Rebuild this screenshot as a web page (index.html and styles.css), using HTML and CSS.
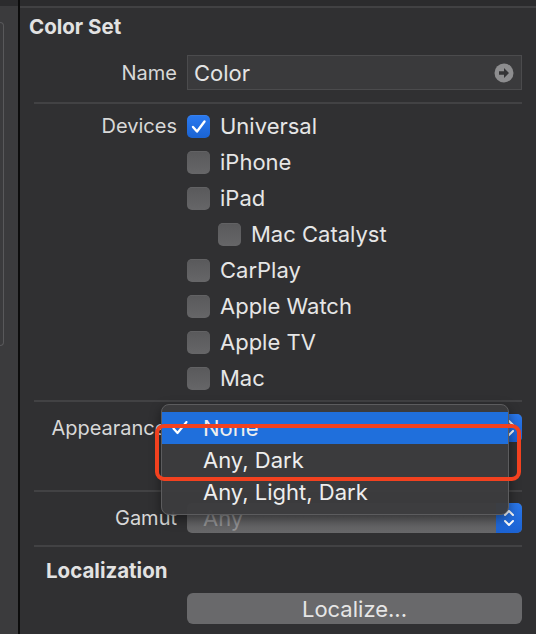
FILE: index.html
```html
<!DOCTYPE html>
<html>
<head>
<meta charset="utf-8">
<link rel="stylesheet" href="styles.css">
</head>
<body>
<div class="app">
  <div class="sidebar">
    <div class="side-top"></div>
    <div class="side-box"></div>
  </div>
  <div class="main">
    <div class="top-band"></div>
    <div class="panel">
      <div class="title">Color Set</div>

      <div class="row name-row">
        <div class="label">Name</div>
        <div class="field">
          <span>Color</span>
          <svg class="go" width="20" height="20" viewBox="0 0 20 20"><circle cx="10" cy="10" r="9.5" fill="#8d8d8f"/><path d="M5 8.2h5V5l5 5-5 5v-3.2H5z" fill="#343436"/></svg>
        </div>
      </div>

      <div class="sep"></div>

      <div class="devices">
        <div class="row drow">
          <div class="label">Devices</div>
          <div class="check-item"><span class="cb on"><svg width="23" height="23" viewBox="0 0 23 23"><path d="M6 12l4 4.5 7.5-10" fill="none" stroke="#fff" stroke-width="2.4" stroke-linecap="round" stroke-linejoin="round"/></svg></span><span class="val">Universal</span></div>
        </div>
        <div class="row drow"><div class="label"></div><div class="check-item"><span class="cb"></span><span class="val">iPhone</span></div></div>
        <div class="row drow"><div class="label"></div><div class="check-item"><span class="cb"></span><span class="val">iPad</span></div></div>
        <div class="row drow"><div class="label"></div><div class="check-item indent"><span class="cb"></span><span class="val">Mac Catalyst</span></div></div>
        <div class="row drow"><div class="label"></div><div class="check-item"><span class="cb"></span><span class="val">CarPlay</span></div></div>
        <div class="row drow"><div class="label"></div><div class="check-item"><span class="cb"></span><span class="val">Apple Watch</span></div></div>
        <div class="row drow"><div class="label"></div><div class="check-item"><span class="cb"></span><span class="val">Apple TV</span></div></div>
        <div class="row drow"><div class="label"></div><div class="check-item"><span class="cb"></span><span class="val">Mac</span></div></div>
      </div>

      <div class="sep"></div>

      <div class="appearance">
        <div class="row">
          <div class="label">Appearances</div>
          <div class="popup-btn blue-btn">
            <span class="pb-text">None</span>
            <span class="stepper"><svg width="26" height="28" viewBox="0 0 26 28"><path d="M9 11l4-4 4 4M9 17l4 4 4-4" fill="none" stroke="#fff" stroke-width="2" stroke-linecap="round" stroke-linejoin="round"/></svg></span>
          </div>
        </div>
        <div class="menu">
          <div class="menu-item sel"><svg class="tick" width="16" height="14" viewBox="0 0 16 14"><path d="M1.5 7.5l4 4.5 9-11" fill="none" stroke="#fff" stroke-width="2.2" stroke-linecap="round" stroke-linejoin="round"/></svg><span>None</span></div>
          <div class="menu-item"><span>Any, Dark</span></div>
          <div class="menu-item"><span>Any, Light, Dark</span></div>
        </div>
        <div class="highlight"></div>
      </div>

      <div class="sep"></div>

      <div class="row gamut-row">
        <div class="label">Gamut</div>
        <div class="popup-btn gray-btn">
          <span class="pb-text dim">Any</span>
          <span class="stepper"><svg width="26" height="30" viewBox="0 0 26 30"><path d="M9 12l4-4 4 4M9 18l4 4 4-4" fill="none" stroke="#fff" stroke-width="2" stroke-linecap="round" stroke-linejoin="round"/></svg></span>
        </div>
      </div>

      <div class="sep"></div>

      <div class="title loc">Localization</div>
      <div class="row">
        <div class="label"></div>
        <div class="button">Localize...</div>
      </div>
    </div>
  </div>
</div>
</body>
</html>
```

FILE: styles.css
```css
* { box-sizing: border-box; }
html, body { margin: 0; padding: 0; }
body {
  width: 536px;
  height: 634px;
  overflow: hidden;
  background: #303032;
  font-family: Inter, "Noto Sans", sans-serif;
  color: #dedede;
}
.app { display: flex; height: 634px; }
.sidebar {
  width: 20px;
  background: #3b3b3d;
  border-right: 2px solid #0c0c0c;
  display: flex;
  flex-direction: column;
  flex: none;
}
.side-top { height: 6px; background: #2b2b2d; }
.side-box {
  margin-top: 16px;
  height: 324px;
  width: 4px;
  border: 1.5px solid #59595b;
  border-left: none;
  border-radius: 0 8px 8px 0;
}
.main { flex: 1; display: flex; flex-direction: column; }
.top-band {
  height: 8px;
  background: #2b2b2d;
  border-bottom: 2px solid #414143;
  flex: none;
}
.panel {
  flex: 1;
  background: #303032;
  display: flex;
  flex-direction: column;
  padding-right: 14px;
}
.title {
  font-weight: 700;
  font-size: 20.5px;
  line-height: 24px;
  height: 24px;
  padding-left: 9px;
  margin-top: 7px;
  color: #e2e2e2;
}
.title.loc { padding-left: 26px; margin-top: 12px; }
.row {
  display: grid;
  grid-template-columns: 157px 335px;
  column-gap: 10px;
  align-items: center;
}
.label {
  text-align: right;
  font-size: 20px;
  color: #d8d8d8;
  white-space: nowrap;
  overflow: hidden;
}
.name-row { margin-top: 16px; }
.field {
  height: 35px;
  background: #3a3a3c;
  border: 1.5px solid #4b4b4d;
  display: flex;
  align-items: center;
  justify-content: space-between;
  padding: 0 7px 0 6px;
  font-size: 22px;
  color: #e4e4e4;
}
.sep {
  height: 2px;
  background: #424244;
  margin-left: 14px;
  margin-top: 12px;
}
.devices { margin-top: 4px; margin-bottom: -8px; }
.drow { height: 36px; }
.check-item { display: flex; align-items: center; gap: 10px; }
.check-item.indent { padding-left: 31px; }
.cb {
  width: 23px;
  height: 23px;
  border-radius: 5px;
  background: linear-gradient(#59595b, #666668);
  box-shadow: inset 0 0.5px 0 rgba(255,255,255,0.12);
  display: block;
  flex: none;
}
.cb.on { background: linear-gradient(#2b7af0, #1a63d3); }
.cb svg { display: block; }
.val { font-size: 22px; color: #e6e6e6; }

.appearance { position: relative; height: 78px; margin-top: -2px; }
.appearance .row { margin-top: 14px; }
.popup-btn {
  height: 28px;
  border-radius: 5px;
  display: flex;
  align-items: center;
  justify-content: space-between;
  overflow: hidden;
  font-size: 22px;
}
.blue-btn { background: #5d5d5f; }
.gray-btn { height: 30px; background: linear-gradient(#58585a, #68686a); }
.pb-text { padding-left: 16px; color: #e6e6e6; }
.pb-text.dim { color: #939395; }
.stepper {
  width: 26px;
  height: 100%;
  background: linear-gradient(#2a78ec, #1b62d2);
  display: flex;
  align-items: center;
  justify-content: center;
}
.stepper svg { display: block; }

.menu {
  position: absolute;
  left: 141px;
  top: 4px;
  width: 348px;
  height: 111px;
  background: rgba(60,60,62,0.97);
  border: 1.5px solid #5c5c5e;
  border-radius: 8px;
  padding-top: 6.5px;
  box-shadow: 0 4px 12px rgba(0,0,0,0.45);
  z-index: 2;
}
.menu-item {
  height: 32px;
  display: flex;
  align-items: center;
  padding-left: 41px;
  position: relative;
  font-size: 22px;
  color: #eeeeee;
}
.menu-item.sel { background: #1f6fdc; }
.tick { position: absolute; left: 10px; top: 9px; }
.highlight {
  position: absolute;
  left: 135px;
  top: 24px;
  width: 366px;
  height: 57px;
  border: 4px solid #f2411f;
  border-radius: 9px;
  z-index: 3;
}

.gamut-row { margin-top: 11px; }
.button {
  margin-top: 10px;
  height: 31px;
  border-radius: 6px;
  background: #69696b;
  color: #e6e6e6;
  font-size: 22px;
  display: flex;
  align-items: center;
  justify-content: center;
}
```
